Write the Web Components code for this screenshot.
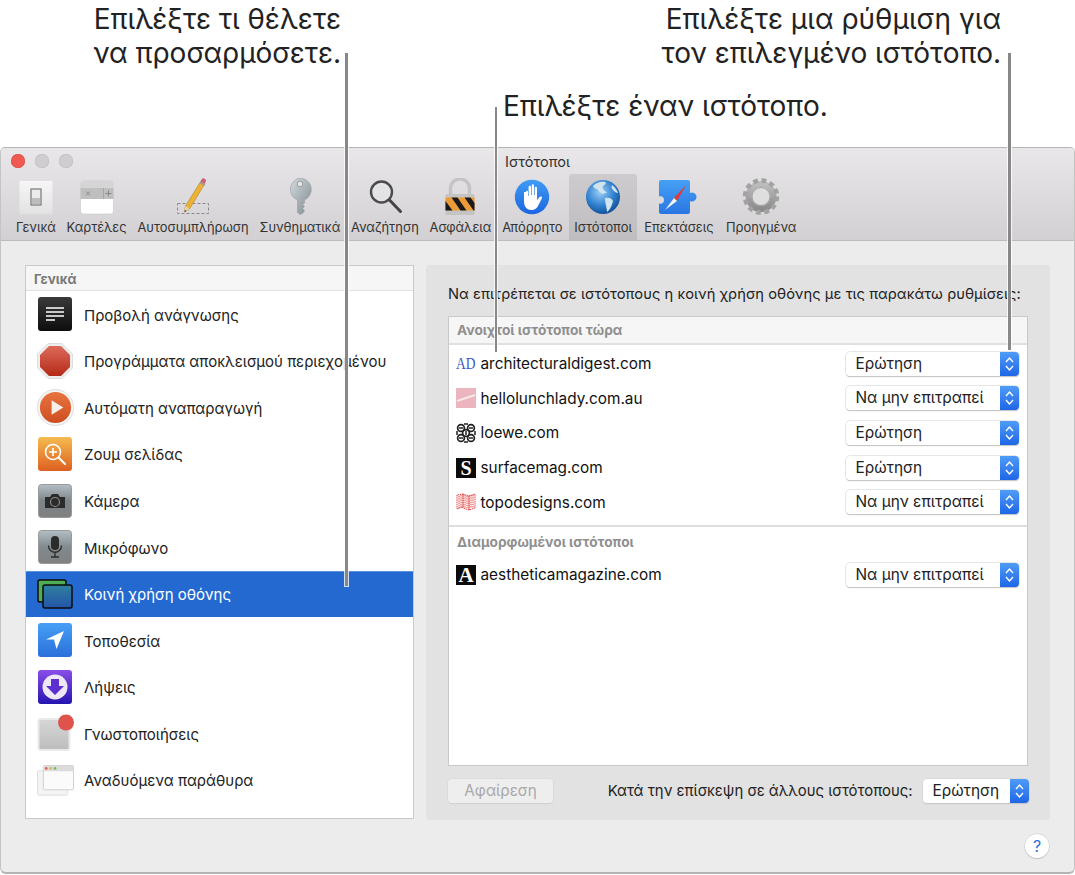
<!doctype html>
<html><head><meta charset="utf-8">
<style>
html,body{margin:0;padding:0;background:#fff}
body{width:1075px;height:875px;overflow:hidden;position:relative;font-family:"Inter","Liberation Sans",sans-serif;color:#1f1f1f}
</style></head><body>
<script>
const UI='"Inter","Liberation Sans",sans-serif';
const ICONS={
 general:`<svg width="38" height="40" viewBox="0 0 38 40"><defs><linearGradient id="a" x1="0" y1="0" x2="0" y2="1"><stop offset="0" stop-color="#f6f6f6"/><stop offset="1" stop-color="#e2e2e2"/></linearGradient></defs><rect x="2.500" y="3" width="33" height="33" fill="url(#a)"/><rect x="14" y="11" width="10" height="16" fill="#ebebeb" stroke="#777" stroke-width="1.200"/><rect x="15" y="20" width="8" height="6" fill="#bdbdbd"/></svg>`,
 tabs:`<svg width="38" height="40" viewBox="0 0 38 40"><rect x="2.500" y="3" width="33" height="33" rx="3" fill="#fff" stroke="#c8c8c8" stroke-width=".6"/><path d="M2.500 10V6a3 3 0 0 1 3-3h27a3 3 0 0 1 3 3v4z" fill="#d5d5d5"/><rect x="2.500" y="10" width="33" height="11" fill="#bfbfbf"/><rect x="25" y="10" width="1" height="11" fill="#a5a5a5"/><path d="M8 13.500l4 4m0-4l-4 4" stroke="#8c8c8c" fill="none"/><path d="M30.500 12.500v6m-3-3h6" stroke="#888" fill="none"/></svg>`,
 pencil:`<svg width="40" height="40" viewBox="0 0 40 40"><rect x="4.500" y="25.500" width="31" height="10" fill="none" stroke="#8a8a8a" stroke-width="1" stroke-dasharray="3 2"/><path d="M28 3l4 2.500-15.500 25.500-5 3 1-6z" fill="#edb234" stroke="#9a7420" stroke-width=".5"/><path d="M11.500 34l1-6 4 3z" fill="#e8d3a8"/><path d="M11.500 34l.5-2 1.500 1z" fill="#333"/><path d="M27.500 3.500l1-2a2 2 0 0 1 4 2.500l-1 2z" fill="#c9607c"/><path d="M27.200 4.500l4.300 2.800" stroke="#999" stroke-width="1.600"/></svg>`,
 key:`<svg width="38" height="40" viewBox="0 0 38 40"><defs><linearGradient id="k" x1="0" y1="0" x2="1" y2="1"><stop offset="0" stop-color="#d2dadd"/><stop offset="1" stop-color="#7f8b90"/></linearGradient></defs><path d="M19 0a11.500 11.500 0 0 1 4.500 22v3l-2 1.500 2 2-2 2 2 2-1.500 2.500-3 1.500-2.500-2V22a11.500 11.500 0 0 1 2.500-22z" fill="url(#k)" stroke="#8b9599" stroke-width=".5"/><circle cx="19" cy="6" r="2.800" fill="#e6e6e6" stroke="#777" stroke-width=".6"/></svg>`,
 search:`<svg width="38" height="40" viewBox="0 0 38 40"><circle cx="15.500" cy="14" r="10.500" fill="#e8e8ea" fill-opacity=".5" stroke="#4a4a4a" stroke-width="2.400"/><path d="M23.500 22l11 11.500" stroke="#444" stroke-width="3" stroke-linecap="round"/></svg>`,
 lock:`<svg width="38" height="40" viewBox="0 0 38 40"><path d="M9.500 17v-6.500a9.500 9.500 0 0 1 19 0V17" fill="none" stroke="#c4c4c4" stroke-width="3.400"/><rect x="4.500" y="16" width="29" height="21" rx="1.500" fill="#c4c4c4"/><rect x="4.500" y="19.500" width="29" height="13" fill="#eb9c38"/><path d="M10.500 19.500h6l9 13h-6zM23.500 19.500h6l4 5.500v7.500h-1zM4.500 23l7 9.500h-7z" fill="#1a1a1a"/></svg>`,
 privacy:`<svg width="38" height="40" viewBox="0 0 38 40"><defs><linearGradient id="p" x1="0" y1="0" x2="0" y2="1"><stop offset="0" stop-color="#3f9bf5"/><stop offset="1" stop-color="#1c66e0"/></linearGradient></defs><circle cx="19" cy="19" r="17.200" fill="url(#p)"/><path d="M11 14v9c0 6 3 9 7.500 9 4 0 6-2.500 7.500-6l3-6c.5-1.500-1.500-2.200-2.500-1l-2.500 3V10c0-1.600-2.300-1.600-2.300 0v7h-.7V7.500c0-1.600-2.300-1.600-2.300 0V17h-.7V9c0-1.600-2.400-1.600-2.400 0v9h-.6v-4c0-1.600-2-1.600-2 0z" fill="#fff"/></svg>`,
 globe:`<svg width="38" height="40" viewBox="0 0 38 40"><defs><radialGradient id="g" cx=".42" cy=".35" r=".7"><stop offset="0" stop-color="#9fd0f5"/><stop offset=".55" stop-color="#3585d2"/><stop offset="1" stop-color="#0e4a94"/></radialGradient></defs><circle cx="19" cy="19" r="17" fill="url(#g)"/><path d="M9 8c3-3 8-5 12-4 2 1 0 3-2 4-1 2 0 4 2 5l2 2c-2 0-3 0-4 1-3-1-5-4-6-5-2 0-3-1-4-3zM21 20c3-1 7 0 8 3-1 4-3 9-6 11 0-4-2-8-2-14zM28 7c3 2 5 5 6 8-2 0-4-2-5-3s-2-3-1-5z" fill="#cfe4ee"/></svg>`,
 ext:`<svg width="42" height="40" viewBox="0 0 42 40"><defs><linearGradient id="e" x1="0" y1="0" x2="0" y2="1"><stop offset="0" stop-color="#46a0f5"/><stop offset="1" stop-color="#2a76e4"/></linearGradient></defs><path d="M3 2h27a2 2 0 0 1 2 2v11a4.500 4.500 0 1 1 0 8v11a2 2 0 0 1-2 2H3a2 2 0 0 1-2-2V25.500c3 1 5-1 5-3.500s-2-4.500-5-3.500V4a2 2 0 0 1 2-2z" fill="url(#e)"/><path d="M28 7L16 20l3 3z" fill="#e53a36"/><path d="M7 32l9-12 3 3z" fill="#f2f2f2"/></svg>`,
 gear:`<svg width="40" height="40" viewBox="0 0 40 40"><defs><linearGradient id="s" x1="0" y1="0" x2="0" y2="1"><stop offset="0" stop-color="#bdbdbd"/><stop offset="1" stop-color="#8a8a8a"/></linearGradient></defs><circle cx="20" cy="18.500" r="12.500" fill="none" stroke="url(#s)" stroke-width="6"/><circle cx="20" cy="18.500" r="16" fill="none" stroke="#a2a2a2" stroke-width="4.500" stroke-dasharray="4.800 3.580"/><circle cx="20" cy="18.500" r="9" fill="#dedede" stroke="#8f8f8f" stroke-width=".8"/></svg>`,
 reader:`<svg viewBox="0 0 34 34"><defs><linearGradient id="r" x1="0" y1="0" x2="0" y2="1"><stop offset="0" stop-color="#3a3a3a"/><stop offset="1" stop-color="#0d0d0d"/></linearGradient></defs><rect width="34" height="34" rx="3" fill="url(#r)"/><path d="M8 11h18M8 15h18M8 19h18M8 23h9" stroke="#fff" stroke-width="1.500"/></svg>`,
 stop:`<svg viewBox="0 0 36 36"><defs><linearGradient id="st" x1="0" y1="0" x2="0" y2="1"><stop offset="0" stop-color="#dd6a5c"/><stop offset="1" stop-color="#b52a16"/></linearGradient></defs><path d="M11 .5h14L35.500 11v14L25 35.500H11L.5 25V11z" fill="#eee" stroke="#ddd"/><path d="M12 3h12l9 9v12l-9 9H12l-9-9V12z" fill="url(#st)"/></svg>`,
 play:`<svg viewBox="0 0 38 38"><defs><linearGradient id="pl" x1="0" y1="0" x2="0" y2="1"><stop offset="0" stop-color="#e8743f"/><stop offset="1" stop-color="#cf4e22"/></linearGradient></defs><circle cx="19" cy="19" r="18.500" fill="#f5f5f5" stroke="#ddd"/><circle cx="19" cy="19" r="16" fill="url(#pl)"/><path d="M15 11.500l12 7.500-12 7.500z" fill="#f6efe9"/></svg>`,
 zoom:`<svg viewBox="0 0 34 34"><defs><linearGradient id="z" x1="0" y1="0" x2="0" y2="1"><stop offset="0" stop-color="#f5bc50"/><stop offset="1" stop-color="#dd5f20"/></linearGradient></defs><rect width="34" height="34" rx="3" fill="url(#z)"/><circle cx="15" cy="15" r="7.500" fill="none" stroke="#fff" stroke-width="1.600"/><path d="M15 11v8m-4-4h8" stroke="#fff" stroke-width="1.600"/><path d="M20.500 20.500L27 27" stroke="#fff" stroke-width="2" stroke-linecap="round"/></svg>`,
 camera:`<svg viewBox="0 0 34 34"><defs><linearGradient id="c" x1="0" y1="0" x2="0" y2="1"><stop offset="0" stop-color="#b3bfc5"/><stop offset=".5" stop-color="#7d8488"/><stop offset="1" stop-color="#808080"/></linearGradient></defs><rect x=".5" y=".5" width="33" height="33" rx="3" fill="url(#c)" stroke="#999"/><path d="M7 13h5l2-3h6l2 3h5v11H7z" fill="#2b2b2b"/><circle cx="17" cy="18" r="4.500" fill="none" stroke="#8b8b8b" stroke-width="1.200"/></svg>`,
 mic:`<svg viewBox="0 0 34 34"><defs><linearGradient id="m" x1="0" y1="0" x2="0" y2="1"><stop offset="0" stop-color="#b3bfc5"/><stop offset=".5" stop-color="#828a8e"/><stop offset="1" stop-color="#808080"/></linearGradient></defs><rect x=".5" y=".5" width="33" height="33" rx="3" fill="url(#m)" stroke="#999"/><rect x="13" y="6" width="8" height="14" rx="4" fill="#2b2b2b"/><path d="M10.500 15.500c0 9 13 9 13 0M17 22v5m-4 0h8" fill="none" stroke="#2b2b2b" stroke-width="1.300"/></svg>`,
 share:`<svg viewBox="0 0 36 30"><defs><linearGradient id="sh" x1="0" y1="0" x2="0" y2="1"><stop offset="0" stop-color="#2f7f9d"/><stop offset="1" stop-color="#2455a8"/></linearGradient></defs><rect x="1" y="1" width="28" height="22" rx="2" fill="#4fae53" stroke="#0b0b0b" stroke-width="1.500"/><rect x="6" y="6" width="29" height="23" rx="2" fill="url(#sh)" stroke="#0b0b0b" stroke-width="1.500"/></svg>`,
 loc:`<svg viewBox="0 0 34 34"><defs><linearGradient id="l" x1="0" y1="0" x2="0" y2="1"><stop offset="0" stop-color="#46a0f5"/><stop offset="1" stop-color="#2a6fdc"/></linearGradient></defs><rect width="34" height="34" rx="3" fill="url(#l)"/><path d="M8 16.500L26 8l-7.500 18-2.500-9.500z" fill="#fff"/></svg>`,
 dl:`<svg viewBox="0 0 34 34"><defs><linearGradient id="d" x1="0" y1="0" x2="0" y2="1"><stop offset="0" stop-color="#8a4ee8"/><stop offset="1" stop-color="#2414b0"/></linearGradient></defs><rect width="34" height="34" rx="3" fill="url(#d)"/><circle cx="17" cy="17" r="12.500" fill="#eee8f6"/><path d="M13 9h8v7h5L17 25 8 16h5z" fill="#5c2fd0"/></svg>`,
 notif:`<svg viewBox="0 0 38 38" overflow="visible"><defs><linearGradient id="n" x1="0" y1="0" x2="0" y2="1"><stop offset="0" stop-color="#d6d6d8"/><stop offset="1" stop-color="#bdbdbd"/></linearGradient></defs><rect x="2.500" y="4" width="31" height="31" rx="2" fill="url(#n)" stroke="#eaeaea" stroke-width="2"/><circle cx="30" cy="7.500" r="8" fill="#e0524c"/></svg>`,
 popup:`<svg viewBox="0 0 38 32"><rect x=".5" y="6" width="31" height="25" rx="1.500" fill="#f4f4f4" stroke="#dedede"/><rect x="6.500" y=".5" width="31" height="25" rx="1.500" fill="#fbfbfb" stroke="#cfcfcf"/><path d="M6.500 6.500V2a1.500 1.500 0 0 1 1.500-1.500h28A1.500 1.500 0 0 1 37.500 2v4.500z" fill="#dcdcdc"/><circle cx="9.500" cy="3.500" r="1.400" fill="#e0605a"/><circle cx="14" cy="3.500" r="1.400" fill="#e3b44f"/><circle cx="18.500" cy="3.500" r="1.400" fill="#6cc05a"/></svg>`
};
const FAV={
 ad:`<span style="display:block;height:20px;overflow:hidden;color:#3b55c8;font:16px/20px 'Liberation Serif',serif;transform:scaleX(.84);transform-origin:0 50%;white-space:nowrap;width:24px">AD</span>`,
 hl:`<svg width="20" height="20" viewBox="0 0 20 20"><rect width="20" height="20" fill="#ecb4bf"/><path d="M1 13L19 7" stroke="#f8e8ea" stroke-width="2"/></svg>`,
 lo:`<svg width="20" height="20" viewBox="0 0 20 20"><rect width="20" height="20" fill="#fff"/><g fill="none" stroke="#222" stroke-width="1.700"><circle cx="5" cy="5" r="3.400"/><circle cx="15" cy="5" r="3.400"/><circle cx="5" cy="15" r="3.400"/><circle cx="15" cy="15" r="3.400"/><circle cx="10" cy="10" r="3.400"/></g><path d="M3 5h4M13 5h4M3 15h4M13 15h4M10 8v4M8 1h4M8 19h4M1 8v4M19 8v4" stroke="#222" stroke-width="1.500"/></svg>`,
 su:`<span style="display:block;width:20px;height:20px;background:#0b0b0b;color:#fff;font:bold 20px/20px 'Liberation Serif',serif;text-align:center">S</span>`,
 to:`<svg width="20" height="20" viewBox="0 0 20 20"><g fill="none" stroke="#e04545" stroke-width="1" stroke-dasharray="1.500 .7"><path d="M1 3v14l6-2V2zM7 2l6 2v14l-6-2zM13 4l6-2v14l-6 2z"/><path d="M3 4v12M5 3v12M9 3v13M11 4v12M15 3v13M17 3v13"/></g></svg>`,
 ae:`<span style="display:block;width:20px;height:20px;background:#0b0b0b;color:#fff;font:bold 21px/21px 'Liberation Serif',serif;text-align:center">A</span>`
};
function def(name,css,render){customElements.define(name,class extends HTMLElement{connectedCallback(){if(this.shadowRoot)return;const s=this.attachShadow({mode:'open'});s.innerHTML=`<style>${css}</style>`+render(this);}})}
def('tool-item',`:host{display:flex;flex-direction:column;align-items:center;height:66px;padding:0 5.400px;border-radius:3px 3px 0 0;box-sizing:border-box}
:host([on]){background:linear-gradient(#cdcbcd,#bfbdbf);margin:0 1.500px 0 1px}
.i{height:40px;margin-top:4px;display:flex;align-items:flex-start;justify-content:center}
.l{font:12.900px/15px ${UI};color:#333;margin-top:2px;white-space:nowrap}`,
 e=>`<div class="i">${ICONS[e.getAttribute('icon')]}</div><div class="l"><slot></slot></div>`);
def('side-row',`:host{display:flex;align-items:center;height:46.600px;padding-left:11px;box-sizing:border-box;font:15px ${UI};color:#222;white-space:nowrap;overflow:hidden}
:host([on]){background:#2469d0;color:#fff;box-shadow:inset 0 1px 0 #5b92e0}
.i{width:36px;height:36px;flex:none;display:flex;align-items:center;justify-content:center;margin-right:11px}
.t{margin-top:1.500px}
svg{display:block;overflow:visible}`,
 e=>`<div class="i"><span style="display:block;flex:none;width:${e.getAttribute('w')||34}px;height:${e.getAttribute('h')||34}px">${ICONS[e.getAttribute('icon')]}</span></div><div class="t"><slot></slot></div>`);
def('side-list',`:host{display:block;flex:none;width:389px;height:554px;background:#fff;border:1px solid #c9c9c9;box-sizing:border-box}
.h{height:24px;font:bold 13px/26px ${UI};color:#777;padding-left:8px;background:#f6f6f6;border-bottom:1px solid #e1e1e1}`,
 e=>`<div class="h">${e.getAttribute('title')}</div><slot></slot>`);
def('up-down',`:host{display:flex;box-sizing:border-box;height:24px;align-items:stretch;border-radius:4px;background:#fff;box-shadow:0 0 0 .5px #d0d0d0,0 1px 1px #bbb;font:15.400px ${UI};color:#222;overflow:hidden;flex:none}
.t{flex:1;padding-left:10px;line-height:24px;white-space:nowrap}
.b{width:19px;background:linear-gradient(#4f9cf8,#1f66e6);display:flex;align-items:center;justify-content:center}`,
 e=>`<div class="t"><slot></slot></div><div class="b"><svg width="11" height="18" viewBox="0 0 11 18"><path d="M2 7l3.500-4L9 7M2 11l3.500 4L9 11" fill="none" stroke="#fff" stroke-width="1.400"/></svg></div>`);
def('site-row',`:host{display:flex;align-items:center;height:34.600px;padding:0 8px 0 7px;font:15.350px ${UI};color:#111}
.f{width:20px;height:20px;margin-right:4.500px;flex:none}
.n{flex:1;white-space:nowrap}
up-down{width:173.500px}`,
 e=>`<div class="f">${FAV[e.getAttribute('fav')]}</div><div class="n"><slot></slot></div><up-down>${e.getAttribute('val')}</up-down>`);
def('group-head',`:host{display:block;font:bold 13.700px ${UI};color:#8f8f8f;padding-left:8px;white-space:nowrap}`,()=>`<slot></slot>`);
def('call-out',`:host{position:absolute;font:28px/34px ${UI};color:#222;white-space:nowrap;text-align:right}`,()=>`<slot></slot>`);
def('lead-line',`:host{position:absolute;width:2.600px;background:#888;z-index:5;box-shadow:0 0 0 1px rgba(255,255,255,.8)}`,()=>``);
def('traffic-lights',`:host{display:flex;gap:10px;padding:0 0 0 10px}
i{display:block;width:14px;height:14px;border-radius:50%;background:#cfcdcf;box-shadow:inset 0 0 0 .5px #bbb}
i:first-of-type{background:#ee5a52;box-shadow:inset 0 0 0 .5px #dd4a42}`,()=>`<i></i><i></i><i></i>`);
def('prefs-window',`:host{display:block;position:absolute;left:0;top:147px;width:1075px;height:727px;box-sizing:border-box;background:#ececec;border:1px solid #b4b4b4;border-bottom-width:2px;border-left-color:#c4c4c4;border-right-color:#c4c4c4;border-radius:5px 5px 6px 6px;overflow:hidden}
.bar{height:92px;background:linear-gradient(#e9e7e9,#d2d0d2);border-bottom:1px solid #bdbdbd;position:relative}
.top{position:relative;height:26px;display:flex;align-items:center}
.title{position:absolute;left:0;right:0;text-align:center;font:14.500px/26px ${UI};color:#333;top:1px}
.tools{display:flex;padding-left:9.500px;height:66px;width:fit-content}
.main{display:flex;gap:12px;padding:24px 25px 0 24px;height:555px}
.right{flex:1;height:555px;background:#e2e2e2;border-radius:4px;box-sizing:border-box;padding:20.500px 21px 0 22px;display:flex;flex-direction:column}
.cap{font:14.700px/17px ${UI};color:#222;white-space:nowrap;height:30.500px;letter-spacing:.05px}
.tbl{height:450px;flex:none;box-sizing:border-box;background:#fff;border:1px solid #c9c9c9;display:flex;flex-direction:column;width:580px}
.gh{height:26px;flex:none;display:flex;align-items:center;background:#f6f6f6;border-bottom:2px solid #e0e0e0}
.rows{padding-top:1.500px}
.sep{border-top:2px solid #dedede;margin-top:5.200px;height:30.700px;display:flex;align-items:center;flex:none}
.foot{display:flex;align-items:center;margin-top:13px;height:24px;width:581px}
.rm{width:105px;height:24px;background:#eeeeee;border-radius:4px;box-shadow:0 0 0 .5px #d5d5d5,0 1px 1px #ccc;text-align:center;font:15.300px/24px ${UI};color:#a9a9a9;flex:none}
.lbl{flex:1;text-align:right;font:14.900px/24px ${UI};color:#222;padding-right:10px;white-space:nowrap}
up-down{width:106.500px}
.help{position:absolute;right:25px;bottom:14px;width:24px;height:24px;border-radius:50%;background:#fff;box-shadow:0 0 0 .5px #ccc,0 1px 1px #bbb;text-align:center;font:16px/24px ${UI};color:#2a70e0}`,
 e=>`<div class="bar"><div class="top"><traffic-lights></traffic-lights><div class="title">Ιστότοποι</div></div>
 <div class="tools">
 <tool-item icon="general">Γενικά</tool-item><tool-item icon="tabs">Καρτέλες</tool-item><tool-item icon="pencil">Αυτοσυμπλήρωση</tool-item><tool-item icon="key">Συνθηματικά</tool-item><tool-item icon="search">Αναζήτηση</tool-item><tool-item icon="lock">Ασφάλεια</tool-item><tool-item icon="privacy">Απόρρητο</tool-item><tool-item icon="globe" on>Ιστότοποι</tool-item><tool-item icon="ext">Επεκτάσεις</tool-item><tool-item icon="gear" style="margin-left:1.500px">Προηγμένα</tool-item>
 </div></div>
 <div class="main">
 <side-list title="Γενικά">
  <side-row icon="reader">Προβολή ανάγνωσης</side-row>
  <side-row icon="stop" w="36" h="36">Προγράμματα αποκλεισμού περιεχομένου</side-row>
  <side-row icon="play" w="37" h="37">Αυτόματη αναπαραγωγή</side-row>
  <side-row icon="zoom">Ζουμ σελίδας</side-row>
  <side-row icon="camera">Κάμερα</side-row>
  <side-row icon="mic">Μικρόφωνο</side-row>
  <side-row icon="share" on w="36" h="30">Κοινή χρήση οθόνης</side-row>
  <side-row icon="loc">Τοποθεσία</side-row>
  <side-row icon="dl">Λήψεις</side-row>
  <side-row icon="notif" w="38" h="38">Γνωστοποιήσεις</side-row>
  <side-row icon="popup" w="37" h="31">Αναδυόμενα παράθυρα</side-row>
 </side-list>
 <div class="right">
  <div class="cap">Να επιτρέπεται σε ιστότοπους η κοινή χρήση οθόνης με τις παρακάτω ρυθμίσεις:</div>
  <div class="tbl">
   <div class="gh"><group-head>Ανοιχτοί ιστότοποι τώρα</group-head></div>
   <div class="rows">
   <site-row fav="ad" val="Ερώτηση">architecturaldigest.com</site-row>
   <site-row fav="hl" val="Να μην επιτραπεί">hellolunchlady.com.au</site-row>
   <site-row fav="lo" val="Ερώτηση">loewe.com</site-row>
   <site-row fav="su" val="Ερώτηση">surfacemag.com</site-row>
   <site-row fav="to" val="Να μην επιτραπεί">topodesigns.com</site-row>
   </div>
   <div class="sep"><group-head>Διαμορφωμένοι ιστότοποι</group-head></div>
   <site-row fav="ae" val="Να μην επιτραπεί">aestheticamagazine.com</site-row>
  </div>
  <div class="foot"><div class="rm">Αφαίρεση</div><div class="lbl">Κατά την επίσκεψη σε άλλους ιστότοπους:</div><up-down>Ερώτηση</up-down></div>
 </div>
 </div>
 <div class="help">?</div>`);
document.body.innerHTML=`
<call-out style="right:734px;top:2px">Επιλέξτε τι θέλετε<br>να προσαρμόσετε.</call-out>
<call-out style="right:74px;top:2px">Επιλέξτε μια ρύθμιση για<br>τον επιλεγμένο ιστότοπο.</call-out>
<call-out style="left:503px;top:89px">Επιλέξτε έναν ιστότοπο.</call-out>
<prefs-window></prefs-window>
<lead-line style="left:345.200px;top:53px;height:533px"></lead-line>
<lead-line style="left:494.500px;top:107px;height:245px"></lead-line>
<lead-line style="left:1008.400px;top:53px;height:297px"></lead-line>`;
</script>
</body></html>
